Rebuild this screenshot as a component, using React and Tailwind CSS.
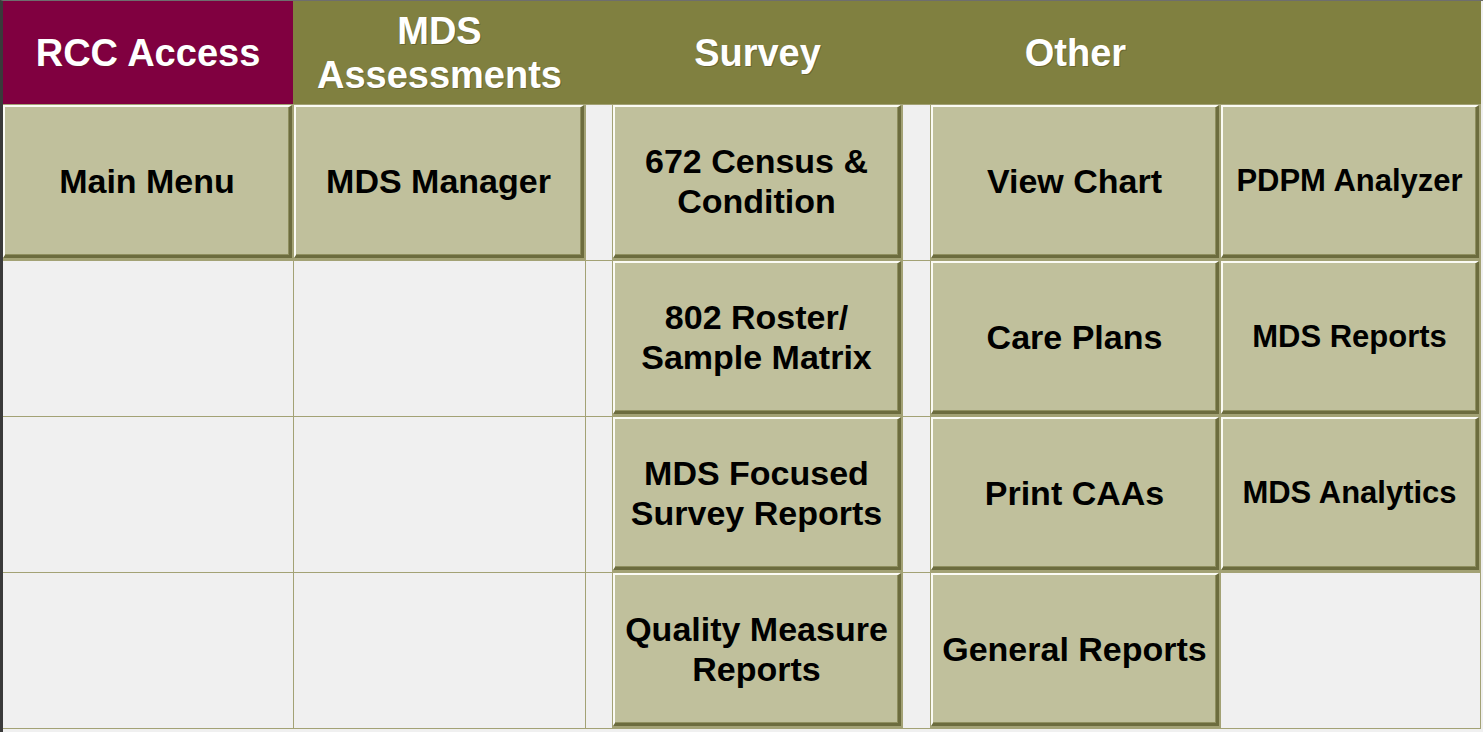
import React from "react";

const F = { fontFamily: '"Liberation Sans", Arial, sans-serif' };

function Btn({ children, small }) {
  return (
    <div className="pr-px pb-[2px] h-full">
      <div
        className={
          "h-full w-full flex items-center justify-center text-center font-bold text-black bg-[#c0c09c] border-t-2 border-l-2 border-r-[3px] border-b-[3px] border-t-[#fbfbf4] border-l-[#fbfbf4] border-r-[#6c6c3e] border-b-[#6c6c3e] shadow-[inset_-1px_-1px_0_#8f8f5f] " +
          (small ? "text-[31px] leading-[38px]" : "text-[34px] leading-[40px]")
        }
      >
        <div>{children}</div>
      </div>
    </div>
  );
}

function Empty() {
  return <div className="bg-[#f0f0f0] h-full" />;
}

function H({ children, maroon }) {
  return (
    <div
      className={
        "flex items-center justify-center text-center font-bold text-white text-[38px] leading-[44px] [text-shadow:1px_1px_0_rgba(60,50,20,0.35)] " +
        (maroon ? "bg-[#800040]" : "bg-[#808040]")
      }
    >
      <div>{children}</div>
    </div>
  );
}

export default function App() {
  const cols = "grid grid-cols-[290px_291px_26px_289px_27px_289px_259px] gap-px";
  return (
    <div
      style={F}
      className="w-[1483px] h-[732px] bg-[#f0f0f0] border-l-[3px] border-l-[#3a3a3a] border-t border-t-[#6e6e6e] overflow-hidden"
    >
      <div className={cols + " h-[103px] w-[1478px] bg-[#808040]"}>
        <H maroon>RCC Access</H>
        <H>
          MDS
          <br />
          Assessments
        </H>
        <H />
        <H>Survey</H>
        <H />
        <H>Other</H>
        <H />
      </div>
      <div className={cols + " grid-rows-[155px_155px_155px_155px] w-[1478px] bg-[#a3a275] pt-px pr-px pb-px"}>
        <Btn>Main Menu</Btn>
        <Btn>MDS Manager</Btn>
        <Empty />
        <Btn>
          672 Census &amp;
          <br />
          Condition
        </Btn>
        <Empty />
        <Btn>View Chart</Btn>
        <Btn small>PDPM Analyzer</Btn>

        <Empty />
        <Empty />
        <Empty />
        <Btn>
          802 Roster/
          <br />
          Sample Matrix
        </Btn>
        <Empty />
        <Btn>Care Plans</Btn>
        <Btn small>MDS Reports</Btn>

        <Empty />
        <Empty />
        <Empty />
        <Btn>
          MDS Focused
          <br />
          Survey Reports
        </Btn>
        <Empty />
        <Btn>Print CAAs</Btn>
        <Btn small>MDS Analytics</Btn>

        <Empty />
        <Empty />
        <Empty />
        <Btn>
          Quality Measure
          <br />
          Reports
        </Btn>
        <Empty />
        <Btn>General Reports</Btn>
        <Empty />
      </div>
    </div>
  );
}
